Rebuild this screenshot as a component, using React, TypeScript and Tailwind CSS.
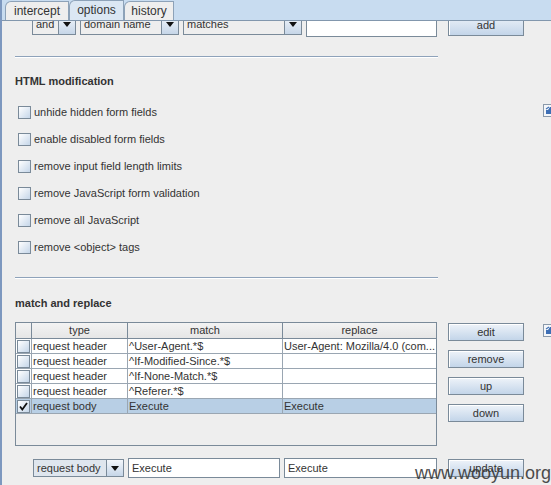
import React from 'react';

function Arrow() {
  return (
    <svg width="8" height="5" viewBox="0 0 8 5">
      <path d="M0 0h8L4 5z" fill="#111" />
    </svg>
  );
}

function Combo({ label, w, h = 'h-[19px]', light }: { label: string; w: string; h?: string; light?: boolean }) {
  return (
    <div className={`flex shrink-0 ${h} ${w} border border-[#7a8a99] ${light ? 'bg-[#dfe6ee]' : 'bg-[#eeeeee]'}`}>
      <div className="flex-1 pl-[3px] flex items-center truncate">{label}</div>
      <div className="w-[17px] border-l border-[#7a8a99] bg-gradient-to-b from-[#f4f7fb] to-[#c6d6e8] flex items-center justify-center">
        <Arrow />
      </div>
    </div>
  );
}

function Field({ value, w, h = 'h-[20px]' }: { value?: string; w: string; h?: string }) {
  return (
    <div className={`${h} ${w} shrink-0 border border-[#7a8a99] bg-white pl-[3px] flex items-center`}>
      {value}
    </div>
  );
}

function Btn({ label, h = 'h-[18px]' }: { label: string; h?: string }) {
  return (
    <div className={`${h} w-[76px] shrink-0 border border-[#7a8a99] bg-gradient-to-b from-[#eef3f9] to-[#c3d5e9] flex items-center justify-center shadow-[inset_1px_1px_0_#fff]`}>
      {label}
    </div>
  );
}

function Check({ checked }: { checked?: boolean }) {
  return (
    <span className="w-[13px] h-[13px] shrink-0 border border-[#7a8a99] bg-gradient-to-br from-white to-[#c5d6e9] flex items-center justify-center">
      {checked && (
        <svg width="11" height="11" viewBox="0 0 11 11">
          <path d="M2 5.5 L4.3 8.5 L9 2" stroke="#111" strokeWidth="1.8" fill="none" />
        </svg>
      )}
    </span>
  );
}

function SideIcon() {
  return (
    <div className="w-[14px] h-[13px] shrink-0 border border-[#8a99aa] bg-[#f4f6f9] flex items-center justify-center">
      <svg width="10" height="9" viewBox="0 0 10 9">
        <path d="M1 8V4h2l2-3h4v7z" fill="#3e6fb5" />
        <path d="M1 3l3-2" stroke="#3e6fb5" strokeWidth="1.2" />
      </svg>
    </div>
  );
}

function Separator() {
  return <div className="ml-[13px] w-[423px] h-[2px] border-t border-[#8ea2ba] border-b border-b-white" />;
}

const options = [
  'unhide hidden form fields',
  'enable disabled form fields',
  'remove input field length limits',
  'remove JavaScript form validation',
  'remove all JavaScript',
  'remove <object> tags',
];

const rules = [
  { type: 'request header', match: '^User-Agent.*$', replace: 'User-Agent: Mozilla/4.0 (com...', on: false },
  { type: 'request header', match: '^If-Modified-Since.*$', replace: '', on: false },
  { type: 'request header', match: '^If-None-Match.*$', replace: '', on: false },
  { type: 'request header', match: '^Referer.*$', replace: '', on: false },
  { type: 'request body', match: 'Execute', replace: 'Execute', on: true },
];

export default function App() {
  return (
    <div className="relative w-[551px] h-[485px] overflow-hidden bg-[#eeeeee] border-l-2 border-[#7d98bf] text-[11px] text-[#333] font-['Liberation_Sans',Arial,sans-serif]">

      {/* Tabs */}
      <div className="relative z-10 h-[21px] bg-[#c8dcf0] border-b border-[#8297ad] flex items-end pl-[3px]">
        <div className="h-[19px] w-[64px] rounded-tl-[6px] border border-b-0 border-[#8da2b8] bg-[#eeeeee] text-center leading-[18px] text-[12px]">
          intercept
        </div>
        <div className="h-[20px] w-[55px] rounded-tl-[6px] border border-b-0 border-[#8da2b8] bg-[#dbe7f3] text-center leading-[19px] text-[12px]">
          options
        </div>
        <div className="h-[19px] w-[50px] rounded-tl-[6px] border border-b-0 border-[#8da2b8] bg-[#eeeeee] text-center leading-[18px] text-[12px]">
          history
        </div>
      </div>

      {/* Filter row (scrolled under tabs) */}
      <div className="flex items-start mt-[-7px] ml-[30px]">
        <Combo label="and" w="w-[44px]" h="h-[21px]" />
        <div className="ml-[4px]"><Combo label="domain name" w="w-[99px]" h="h-[21px]" /></div>
        <div className="ml-[4px]"><Combo label="matches" w="w-[119px]" h="h-[21px]" /></div>
        <div className="ml-[4px]"><Field w="w-[131px]" h="h-[23px]" /></div>
        <div className="ml-[11px]"><Btn label="add" h="h-[22px]" /></div>
      </div>

      <div className="mt-[19px]"><Separator /></div>

      {/* HTML modification */}
      <div className="mt-[16px] ml-[13px] h-[14px] leading-[14px] font-bold">HTML modification</div>
      <div className="flex mt-[11px]">
        <div className="flex-1 flex flex-col">
          {options.map((o) => (
            <div key={o} className="h-[27px] flex items-center gap-[3px] pl-[16px]">
              <Check />
              <span>{o}</span>
            </div>
          ))}
        </div>
        <div className="mt-[5px] mr-[-6px]"><SideIcon /></div>
      </div>

      <div className="mt-[16px]"><Separator /></div>

      {/* match and replace */}
      <div className="mt-[17px] ml-[13px] h-[14px] leading-[14px] font-bold">match and replace</div>
      <div className="flex mt-[12px] ml-[13px]">
        <div className="w-[422px] h-[124px] shrink-0 border border-[#7a8a99] bg-[#eeeeee]">
          <div className="grid grid-cols-[16px_96px_155px_1fr] h-[16px] border-b border-[#7a8a99] bg-gradient-to-b from-[#f3f3f3] to-[#e6e6e6] leading-[15px] text-center">
            <div className="border-r border-[#7a8a99]" />
            <div className="border-r border-[#7a8a99]">type</div>
            <div className="border-r border-[#7a8a99]">match</div>
            <div>replace</div>
          </div>
          {rules.map((r, i) => (
            <div
              key={i}
              className={`grid grid-cols-[16px_96px_155px_1fr] h-[15px] border-b border-[#9aa6b2] leading-[14px] ${r.on ? 'bg-[#b8cfe5]' : 'bg-white'}`}
            >
              <div className="border-r border-[#9aa6b2] flex items-center justify-center">
                <Check checked={r.on} />
              </div>
              <div className="border-r border-[#9aa6b2] pl-[1px] truncate">{r.type}</div>
              <div className="border-r border-[#9aa6b2] pl-[1px] truncate">{r.match}</div>
              <div className="pl-[1px] whitespace-nowrap overflow-hidden">{r.replace}</div>
            </div>
          ))}
        </div>
        <div className="ml-[11px] mt-[1px] flex flex-col gap-[9px] shrink-0">
          <Btn label="edit" />
          <Btn label="remove" />
          <Btn label="up" />
          <Btn label="down" />
        </div>
        <div className="ml-[19px] mt-[2px]"><SideIcon /></div>
      </div>

      {/* Edit row */}
      <div className="flex items-center mt-[12px] ml-[31px] h-[20px]">
        <Combo label="request body" w="w-[91px]" h="h-[18px]" light />
        <div className="ml-[4px]"><Field value="Execute" w="w-[152px]" /></div>
        <div className="ml-[4px]"><Field value="Execute" w="w-[153px]" /></div>
        <div className="ml-[11px]"><Btn label="update" /></div>
      </div>

      {/* Watermark */}
      <div className="absolute right-0 top-[464px] text-[18px] leading-[18px] text-[#3a3a3a] opacity-90">
        www.wooyun.org
      </div>
    </div>
  );
}
